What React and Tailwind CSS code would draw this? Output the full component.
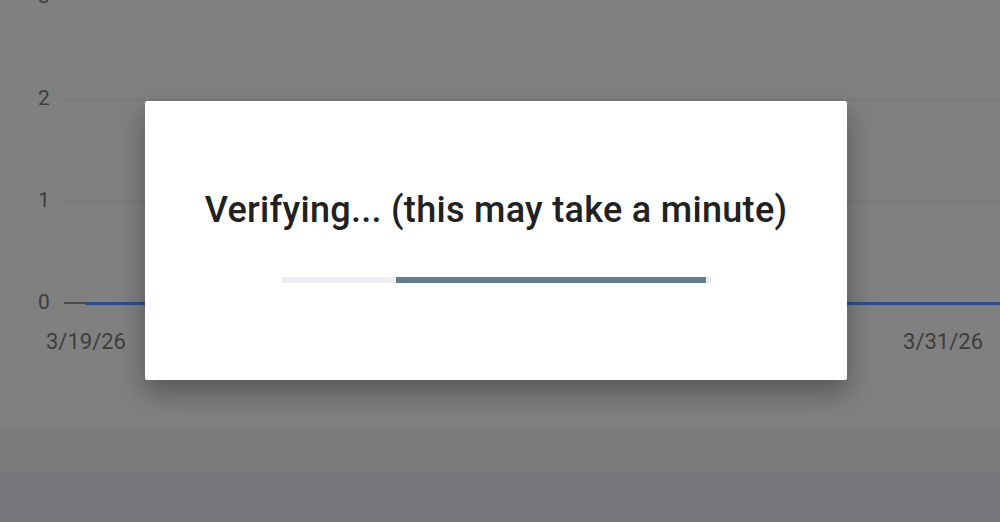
const yTicks = ["3", "2", "1", "0"];

const GridRow = ({ label, isBase }) => (
  <div className="flex items-center h-[102px]">
    <span className="w-[64px] pl-[38px] text-[21px] text-[#3d3d3d]">{label}</span>
    {isBase ? (
      <div className="flex-1 flex items-center">
        <div className="w-[21px] h-[2px] bg-[#4a4a4a]" />
        <div className="flex-1 h-[3px] bg-[#2d4f8c]" />
      </div>
    ) : (
      <div className="flex-1 h-px bg-[#767676]" />
    )}
  </div>
);

const App = () => {
  return (
    <div
      className="relative w-[1000px] h-[522px] overflow-hidden bg-[#808080]"
      style={{ fontFamily: "Roboto, 'Liberation Sans', sans-serif" }}
    >
      {/* Chart */}
      <div className="h-[428px] flex flex-col">
        <div className="-mt-[54px]">
          {yTicks.map((t) => (
            <GridRow key={t} label={t} isBase={t === "0"} />
          ))}
        </div>
        <div className="flex justify-between -mt-[29px] pl-[46px] pr-[17px] text-[22px] text-[#3d3d3d]">
          <span>3/19/26</span>
          <span>3/31/26</span>
        </div>
      </div>
      <div className="h-[44px] bg-[#7b7c7e]" />
      <div className="h-[50px] bg-[#76777b]" />

      {/* Dialog */}
      <div className="absolute inset-0 flex items-start pl-[145px] pt-[101px]">
        <div className="w-[702px] h-[279px] bg-white rounded-[2px] shadow-[0_12px_28px_rgba(0,0,0,0.35)] flex flex-col items-center">
          <h2 className="mt-[87px] text-[36px] leading-[44px] font-medium text-[#212121] tracking-[0.3px]">
            Verifying... (this may take a minute)
          </h2>
          <div className="mt-[45px] w-[430px] h-[6px] bg-[#eceff1] flex">
            <div className="ml-[115px] w-[310px] h-full bg-[#607d8b]" />
          </div>
        </div>
      </div>
    </div>
  );
};

export default App;
